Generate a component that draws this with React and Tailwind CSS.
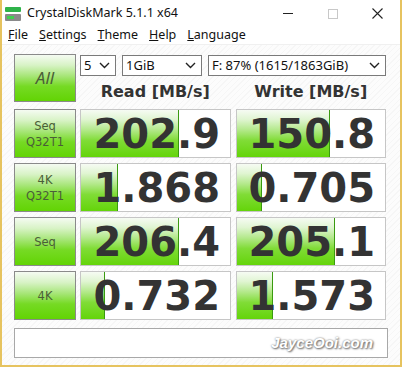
import React from 'react';

const rows = [
  { label: ['Seq', 'Q32T1'], read: '202.9', readPct: 66, write: '150.8', writePct: 63 },
  { label: ['4K', 'Q32T1'], read: '1.868', readPct: 25, write: '0.705', writePct: 17 },
  { label: ['Seq'], read: '206.4', readPct: 66, write: '205.1', writePct: 66 },
  { label: ['4K'], read: '0.732', readPct: 16, write: '1.573', writePct: 24 },
];

const greenBtn =
  'bg-[linear-gradient(to_bottom,#f5fbf2_0%,#d8f3c6_22%,#a8e67a_45%,#76da24_68%,#62d404_100%)] border border-[#8a8a8a]';

const Chevron = () => (
  <svg width="11" height="7" viewBox="0 0 11 7" className="shrink-0">
    <path d="M1 1 L5.5 5.5 L10 1" fill="none" stroke="#222" strokeWidth="1.4" />
  </svg>
);

const Select = ({ value, className }) => (
  <div
    className={`h-[21px] flex items-center justify-between border border-[#7a7a7a] bg-white pl-[3px] pr-[5px] text-[13px] text-[#111] ${className}`}
  >
    <span>{value}</span>
    <Chevron />
  </div>
);

const Value = ({ text, pct }) => (
  <div className="relative h-[49px] border border-[#c6c6c6] bg-white overflow-hidden">
    <div
      className="absolute left-0 top-0 bottom-0 border-r border-[#3a9a10] bg-[linear-gradient(to_bottom,#f6fbf3_0%,#e0f5d2_20%,#b4e98c_42%,#80dc36_65%,#64d40a_100%)]"
      style={{ width: `${pct}%` }}
    />
    <div className="relative h-full flex items-center justify-end pr-[10px] font-['DejaVu_Sans',sans-serif] font-bold text-[40px] leading-none text-[#333]">
      {text}
    </div>
  </div>
);

export default function App() {
  return (
    <div className="w-[402px] h-[367px] border-2 border-t-0 border-[#e6c35f] bg-white font-['Noto_Sans',sans-serif] flex flex-col overflow-hidden">
      {/* title bar */}
      <div className="h-[27px] flex items-center pl-[2px] text-[12.5px] text-[#111] shrink-0">
        <svg width="18" height="16" viewBox="0 0 18 16" className="mr-[5px]">
          <rect x="1" y="1" width="16" height="5" rx="1" fill="#2fb34a" />
          <rect x="1" y="8" width="16" height="7" rx="1" fill="#8a8a8a" />
          <rect x="3" y="10" width="7" height="3" fill="#3fcf4f" />
        </svg>
        <span>CrystalDiskMark 5.1.1 x64</span>
        <div className="ml-auto flex items-center">
          <div className="w-[45px] flex justify-center">
            <div className="w-[10px] h-[1px] bg-[#222]" />
          </div>
          <div className="w-[45px] flex justify-center">
            <div className="w-[10px] h-[10px] border border-[#c8c8c8]" />
          </div>
          <div className="w-[45px] flex justify-center">
            <svg width="11" height="11" viewBox="0 0 11 11">
              <path d="M0.5 0.5 L10.5 10.5 M10.5 0.5 L0.5 10.5" stroke="#222" strokeWidth="1.1" />
            </svg>
          </div>
        </div>
      </div>
      {/* menu */}
      <div className="h-[18px] flex items-center gap-[11px] pl-[6px] text-[12.5px] text-[#111] border-b border-[#f0f0f0] shrink-0">
        <span><u>F</u>ile</span>
        <span><u>S</u>ettings</span>
        <span><u>T</u>heme</span>
        <span><u>H</u>elp</span>
        <span><u>L</u>anguage</span>
      </div>
      {/* content */}
      <div className="flex-1 pt-[9px] pl-[12px] pr-[12px] bg-[repeating-linear-gradient(135deg,#fcfcfc_0px,#fcfcfc_3px,#f6f6f6_3px,#f6f6f6_4px)]">
        <div className="grid grid-cols-[62px_151px_151px] gap-x-[4px] gap-y-[5px]">
          <div className={`${greenBtn} h-[48px] flex items-center justify-center text-[17px] text-[#4a5e38] italic`}>
            All
          </div>
          <div className="col-span-2 flex flex-col">
            <div className="flex gap-[6px] mt-[1px]">
              <Select value="5" className="w-[36px]" />
              <Select value="1GiB" className="w-[80px]" />
              <Select value="F: 87% (1615/1863GiB)" className="flex-1" />
            </div>
            <div className="flex mt-[4px] font-['DejaVu_Sans',sans-serif] font-bold text-[16px] text-[#333]">
              <div className="w-[151px] text-center">Read [MB/s]</div>
              <div className="w-[151px] ml-[5px] text-center">Write [MB/s]</div>
            </div>
          </div>
          {rows.map((r, i) => (
            <React.Fragment key={i}>
              <div
                className={`${greenBtn} h-[49px] flex flex-col items-center justify-center text-[11.5px] leading-[16px] text-[#4a5e38] font-['DejaVu_Sans',sans-serif]`}
              >
                {r.label.map((l) => (
                  <span key={l}>{l}</span>
                ))}
              </div>
              <Value text={r.read} pct={r.readPct} />
              <div className="ml-[1px]">
                <Value text={r.write} pct={r.writePct} />
              </div>
            </React.Fragment>
          ))}
        </div>
        <div className="mt-[8px] w-[374px] h-[30px] border border-[#a8a8a8] bg-white flex items-center justify-end pr-[14px]">
          <span className="font-['Liberation_Sans',sans-serif] font-bold italic text-[15px] text-white [text-shadow:0_0_2px_#777,1px_1px_2px_#666]">
            JayceOoi.com
          </span>
        </div>
      </div>
    </div>
  );
}
